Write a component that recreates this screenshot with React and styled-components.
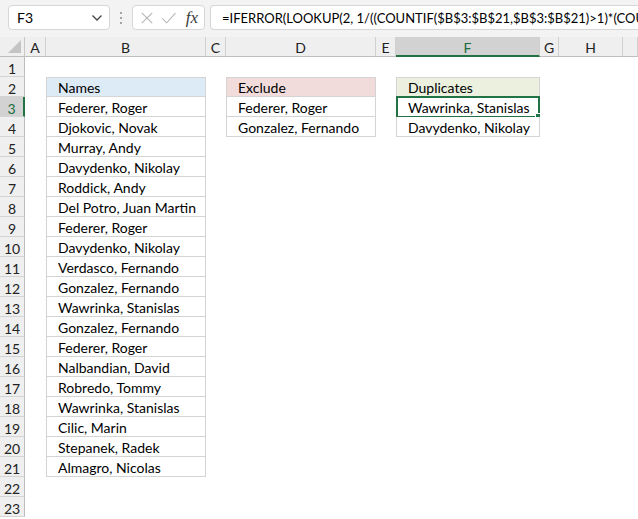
import React from "react";
import styled, { createGlobalStyle } from "styled-components";

const GlobalStyle = createGlobalStyle`
  html, body { margin: 0; padding: 0; background: #ffffff; }
  body {
    font-family: "Lato", "Liberation Sans", sans-serif;
    overflow: hidden;
    color: #000;
  }
`;

const Page = styled.div`
  width: 638px;
  height: 519px;
  overflow: hidden;
  background: #ffffff;
`;

const FormulaBar = styled.div`
  height: 37px;
  background: #f3f3f3;
  display: flex;
  align-items: flex-start;
  padding: 5px 0 0 8px;
  box-sizing: border-box;
`;

const Box = styled.div`
  height: 25px;
  box-sizing: border-box;
  background: #ffffff;
  border: 1px solid #d6d6d6;
  border-radius: 4px;
  display: flex;
  align-items: center;
`;

const NameBox = styled(Box)`
  width: 102px;
  padding: 0 6px 0 8px;
  justify-content: space-between;
  font-size: 14px;
`;

const Dots = styled.div`
  width: 22px;
  height: 25px;
  display: flex;
  flex-direction: column;
  align-items: center;
  justify-content: center;
  gap: 3px;
  span {
    width: 2px;
    height: 2px;
    background: #8a8a8a;
    border-radius: 1px;
  }
`;

const FxBox = styled(Box)`
  width: 73px;
  padding: 0 6px 0 7px;
  gap: 7px;
`;

const Fx = styled.span`
  font-family: "Liberation Serif", "DejaVu Serif", serif;
  font-style: italic;
  font-size: 17px;
  color: #3a3a3a;
  margin-left: 2px;
`;

const FormulaInput = styled(Box)`
  margin-left: 5px;
  flex: 1;
  min-width: 0;
  border-right: none;
  border-radius: 4px 0 0 4px;
  padding-left: 11px;
  font-size: 13px;
  white-space: nowrap;
  overflow: hidden;
`;

const Sheet = styled.div`
  display: grid;
  grid-template-columns: 25px 21px 160px 20px 150px 20px 144px 19px 64px 1fr;
  grid-auto-rows: 20px;
`;

const Corner = styled.div`
  background: #efefef;
  border-right: 1px solid #c8c8c8;
  border-bottom: 1px solid #bdbdbd;
  box-sizing: border-box;
  position: relative;
  &::after {
    content: "";
    position: absolute;
    right: 3px;
    bottom: 3px;
    width: 0;
    height: 0;
    border-left: 13px solid transparent;
    border-bottom: 13px solid #c4c4c4;
  }
`;

const ColHead = styled.div`
  background: ${(p) => (p.$selected ? "#d2d2d2" : "#efefef")};
  color: ${(p) => (p.$selected ? "#1d6b3c" : "#222")};
  border-right: 1px solid #d0d0d0;
  border-bottom: ${(p) => (p.$selected ? "2px solid #217346" : "1px solid #bdbdbd")};
  box-sizing: border-box;
  display: flex;
  align-items: center;
  justify-content: center;
  font-size: 14px;
  padding-top: ${(p) => (p.$selected ? "3px" : "2px")};
`;

const RowHead = styled.div`
  background: ${(p) => (p.$selected ? "#d2d2d2" : "#efefef")};
  color: ${(p) => (p.$selected ? "#1d6b3c" : "#222")};
  border-right: ${(p) => (p.$selected ? "2px solid #217346" : "1px solid #bdbdbd")};
  border-bottom: 1px solid #d4d4d4;
  box-sizing: border-box;
  display: flex;
  align-items: center;
  justify-content: center;
  font-size: 14px;
  padding-top: 3px;
`;

const Cell = styled.div`
  position: relative;
  box-sizing: border-box;
  background: ${(p) => p.$fill || "#ffffff"};
  ${(p) =>
    p.$boxed &&
    `
    border-left: 1px solid #d4d4d4;
    border-right: 1px solid #d4d4d4;
    border-bottom: 1px solid #d4d4d4;
  `}
  ${(p) => p.$top && `border-top: 1px solid #d4d4d4;`}
  padding-left: ${(p) => (p.$boxed ? "11px" : "0")};
  padding-top: ${(p) => (p.$top ? "2px" : "3px")};
  font-size: 14px;
  line-height: 16px;
  white-space: nowrap;
  display: flex;
  align-items: center;
`;

const Selection = styled.div`
  position: absolute;
  left: -1px;
  top: -1px;
  right: -1px;
  bottom: -2px;
  border: 2px solid #217346;
  pointer-events: none;
  &::after {
    content: "";
    position: absolute;
    right: -5px;
    bottom: -5px;
    width: 6px;
    height: 6px;
    background: #217346;
    border: 1px solid #fff;
  }
`;

const names = [
  "Federer, Roger",
  "Djokovic, Novak",
  "Murray, Andy",
  "Davydenko, Nikolay",
  "Roddick, Andy",
  "Del Potro, Juan Martin",
  "Federer, Roger",
  "Davydenko, Nikolay",
  "Verdasco, Fernando",
  "Gonzalez, Fernando",
  "Wawrinka, Stanislas",
  "Gonzalez, Fernando",
  "Federer, Roger",
  "Nalbandian, David",
  "Robredo, Tommy",
  "Wawrinka, Stanislas",
  "Cilic, Marin",
  "Stepanek, Radek",
  "Almagro, Nicolas",
];

const exclude = ["Federer, Roger", "Gonzalez, Fernando"];
const duplicates = ["Wawrinka, Stanislas", "Davydenko, Nikolay"];

const letters = ["A", "B", "C", "D", "E", "F", "G", "H", ""];

function tableCell(list, header, fill, row, key) {
  if (row === 2) {
    return (
      <Cell key={key} $boxed $top $fill={fill}>
        {header}
      </Cell>
    );
  }
  const i = row - 3;
  if (i >= 0 && i < list.length) {
    return (
      <Cell key={key} $boxed>
        {list[i]}
      </Cell>
    );
  }
  return <Cell key={key} />;
}

function Row({ n }) {
  const cells = [];
  cells.push(
    <RowHead key="h" $selected={n === 3}>
      {n}
    </RowHead>
  );
  cells.push(<Cell key="a" />);
  cells.push(tableCell(names, "Names", "#ddebf7", n, "b"));
  cells.push(<Cell key="c" />);
  cells.push(tableCell(exclude, "Exclude", "#f2dcdb", n, "d"));
  cells.push(<Cell key="e" />);
  if (n === 3) {
    cells.push(
      <Cell key="f" $boxed>
        {duplicates[0]}
        <Selection />
      </Cell>
    );
  } else {
    cells.push(tableCell(duplicates, "Duplicates", "#ebf1de", n, "f"));
  }
  cells.push(<Cell key="g" />);
  cells.push(<Cell key="h2" />);
  cells.push(<Cell key="i" />);
  return <>{cells}</>;
}

export default function App() {
  const rows = [];
  for (let n = 1; n <= 23; n++) rows.push(<Row key={n} n={n} />);
  return (
    <Page>
      <GlobalStyle />
      <FormulaBar>
        <NameBox>
          <span>F3</span>
          <svg width="12" height="8" viewBox="0 0 12 8">
            <path d="M1.5 1.5 L6 6 L10.5 1.5" fill="none" stroke="#444" strokeWidth="1.3" />
          </svg>
        </NameBox>
        <Dots>
          <span />
          <span />
          <span />
        </Dots>
        <FxBox>
          <svg width="16" height="16" viewBox="0 0 16 16">
            <path d="M2 2 L14 14 M14 2 L2 14" stroke="#b5b5b5" strokeWidth="1.2" fill="none" />
          </svg>
          <svg width="18" height="16" viewBox="0 0 18 16">
            <path d="M1.5 8.5 L6.5 13.5 L16.5 2.5" stroke="#b5b5b5" strokeWidth="1.2" fill="none" />
          </svg>
          <Fx>fx</Fx>
        </FxBox>
        <FormulaInput>
          =IFERROR(LOOKUP(2, 1/((COUNTIF($B$3:$B$21,$B$3:$B$21)&gt;1)*(COU
        </FormulaInput>
      </FormulaBar>
      <Sheet>
        <Corner />
        {letters.map((l, i) => (
          <ColHead key={i} $selected={l === "F"}>
            {l}
          </ColHead>
        ))}
        {rows}
      </Sheet>
    </Page>
  );
}
